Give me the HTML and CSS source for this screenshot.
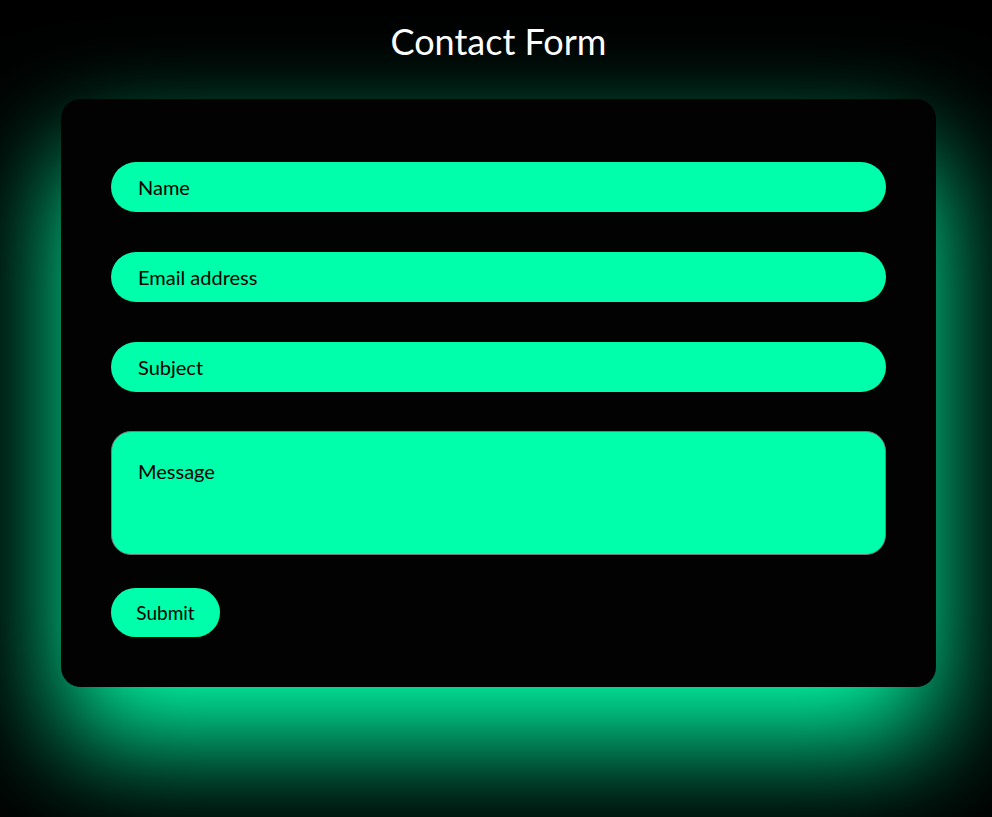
FILE: index.html
```html
<!DOCTYPE html>
<html lang="en">
<head>
<meta charset="utf-8">
<title>Contact Form</title>
<link rel="stylesheet" href="styles.css">
</head>
<body>
<main class="page">
  <h1 class="title">Contact Form</h1>
  <form class="card">
    <input class="field" type="text" placeholder="Name">
    <input class="field" type="email" placeholder="Email address">
    <input class="field" type="text" placeholder="Subject">
    <textarea class="field area" placeholder="Message"></textarea>
    <button class="submit" type="button">Submit</button>
  </form>
</main>
</body>
</html>
```

FILE: styles.css
```css
html, body {
  margin: 0;
  padding: 0;
  background: #000;
  height: 100%;
  overflow: hidden;
}
.page {
  padding: 0 56px 0 61px;
  font-family: Lato, "Open Sans", sans-serif;
}
.title {
  margin: 0;
  padding-top: 20px;
  height: 99px;
  box-sizing: border-box;
  text-align: center;
  color: #fff;
  font-weight: 400;
  font-size: 36px;
  line-height: 42px;
}
.card {
  display: flex;
  flex-direction: column;
  align-items: flex-start;
  gap: 40px;
  background: #020202;
  border-radius: 20px;
  padding: 63px 50px 50px 50px;
  box-shadow: 0 55px 115px #00ffaa;
}
.field {
  box-sizing: border-box;
  width: 100%;
  height: 50px;
  border: none;
  outline: none;
  border-radius: 25px;
  background: #00ffaa;
  padding: 0 27px;
  font-family: inherit;
  font-size: 20px;
  color: #000;
  margin: 0;
}
.field.mid {
  margin-top: -1px;
}
.field::placeholder {
  color: #000;
  opacity: 1;
}
.area {
  height: 124px;
  margin-top: -1px;
  border: 1px solid #777;
  border-radius: 20px;
  padding: 27px 26px;
  resize: none;
  display: block;
}
.submit {
  margin-top: -7px;
  height: 49px;
  width: 109px;
  border: none;
  border-radius: 25px;
  background: #00ffaa;
  color: #000;
  font-family: inherit;
  font-size: 19px;
  padding: 0;
}
```
